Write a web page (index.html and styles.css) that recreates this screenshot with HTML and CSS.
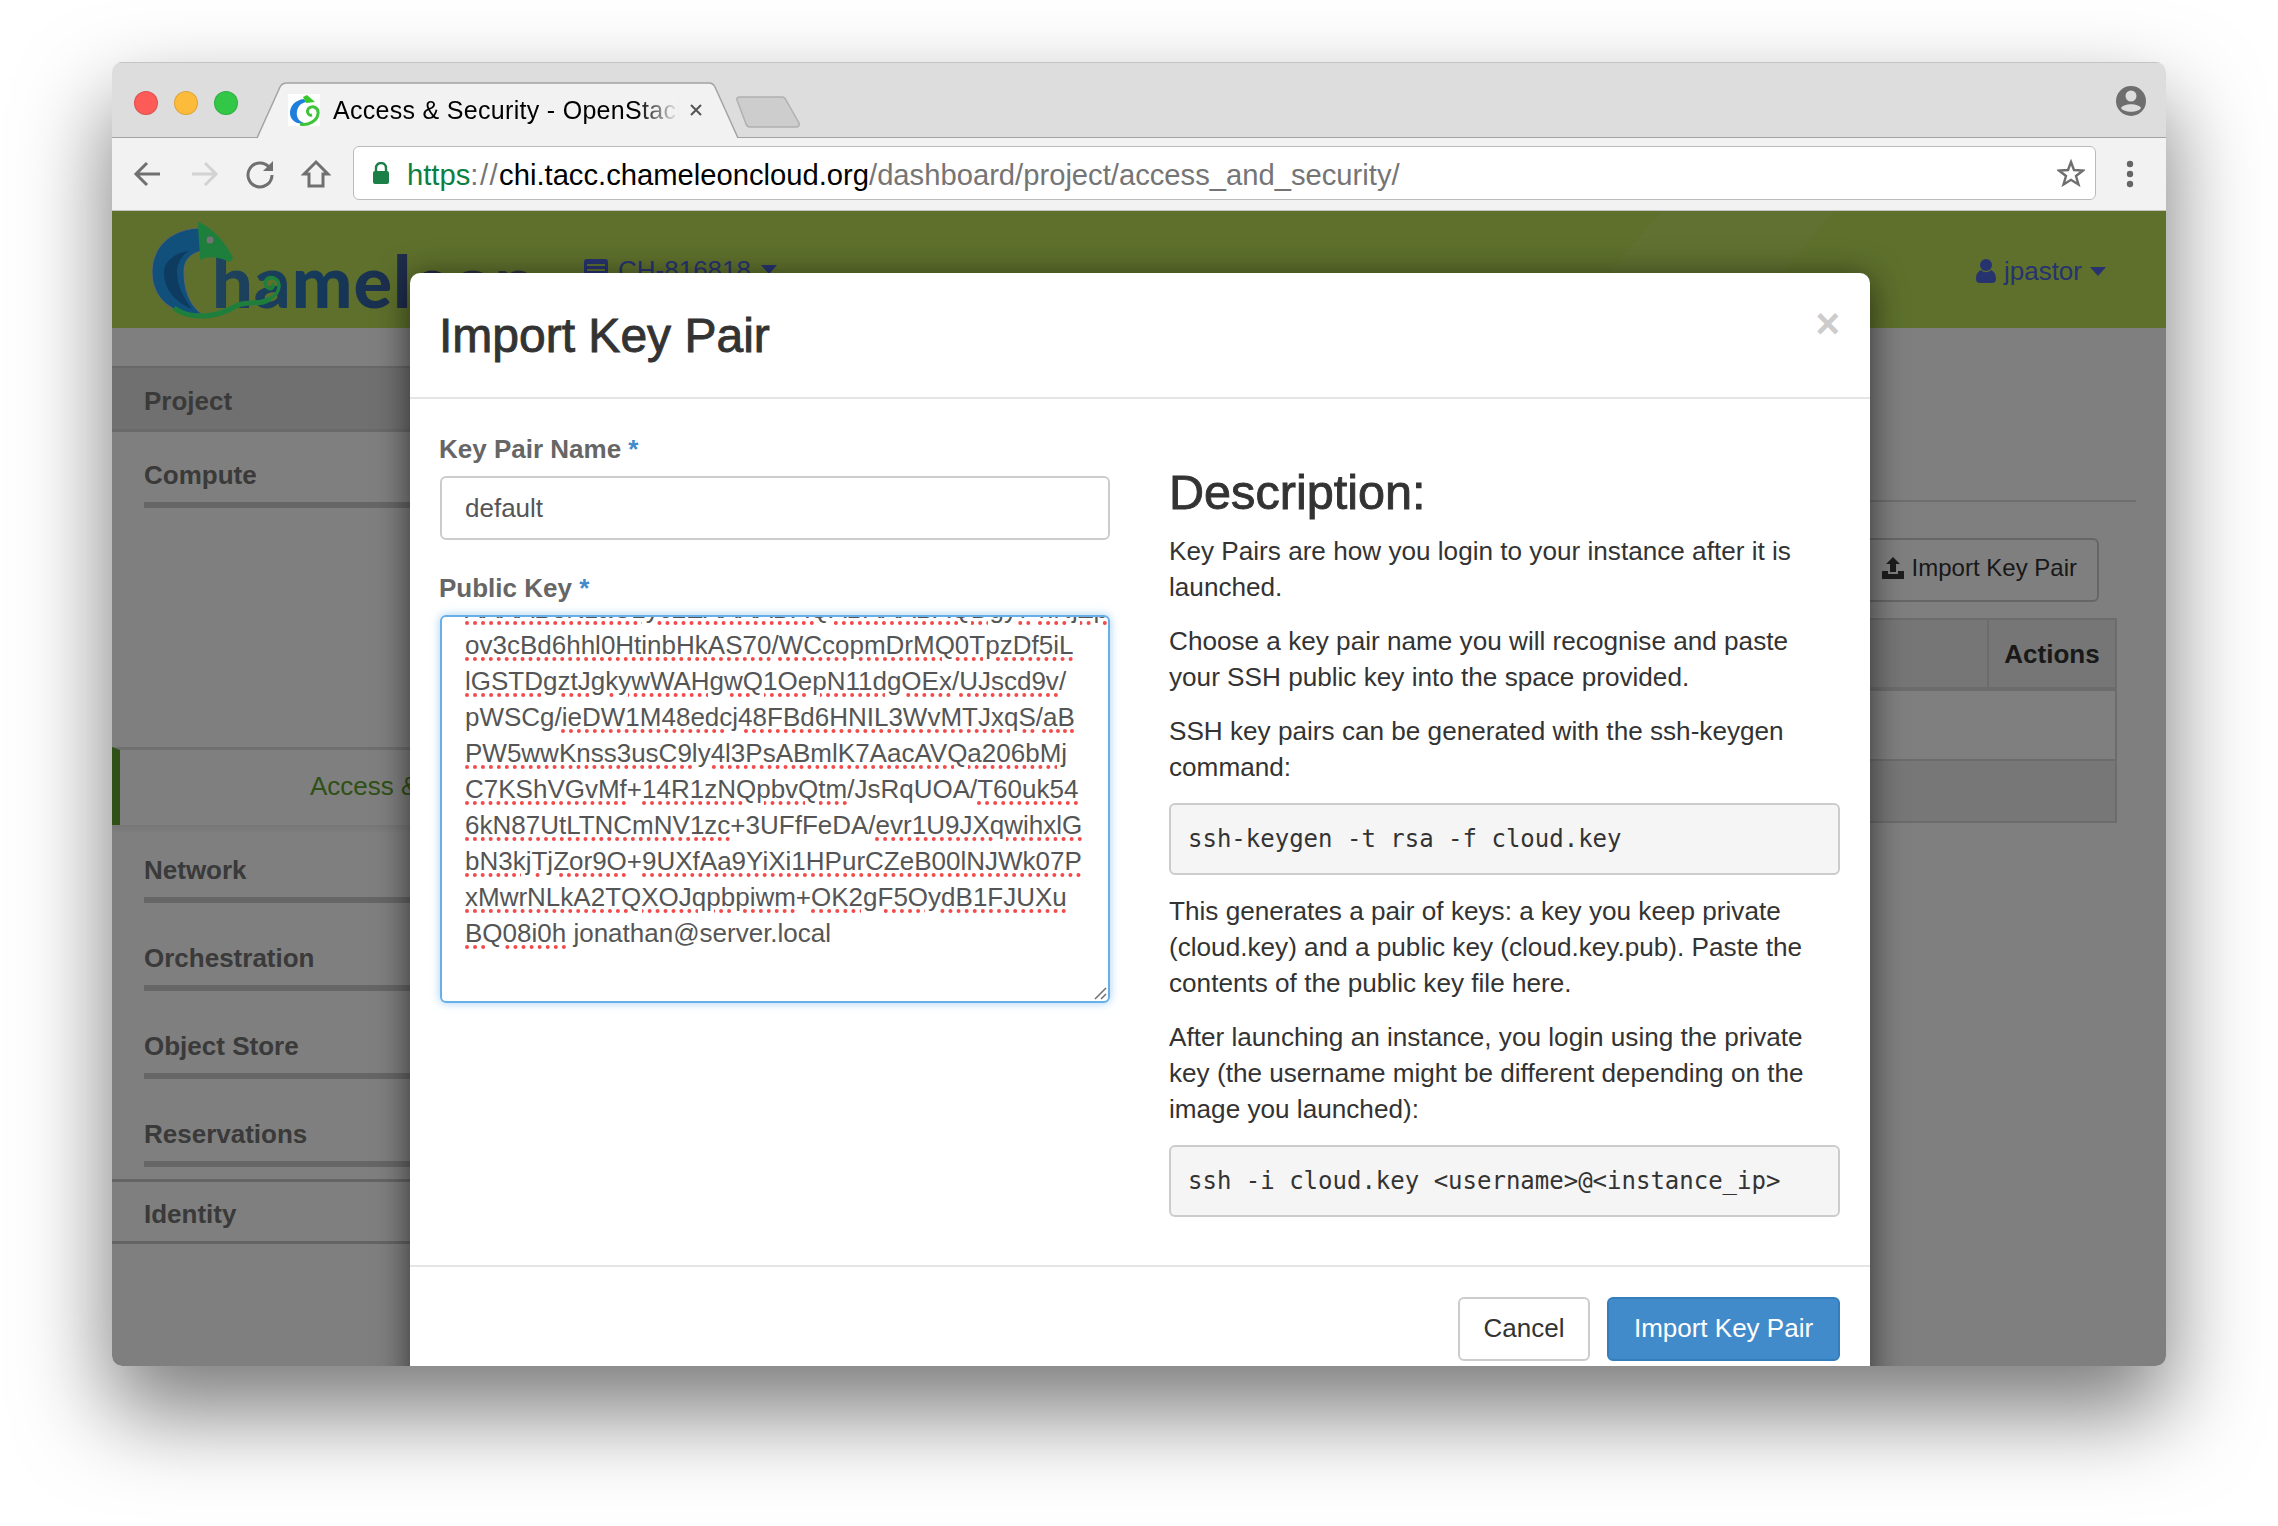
FILE: index.html
```html
<!DOCTYPE html>
<html lang="en">

<head>
    <meta charset="UTF-8">
    <title>Access &amp; Security - OpenStack</title>
    <link rel="stylesheet" href="styles.css">
</head>

<body>
    <div class="window">
        <div class="titlebar">
            <div class="lights">
                <span class="light red"></span>
                <span class="light yellow"></span>
                <span class="light green"></span>
            </div>
            <div class="tab">
                <svg class="tab-shape" width="484" height="57" viewBox="0 0 484 57">
                    <path d="M1 56 L24 5 Q26 1 31 1 L453 1 Q457 1 459 5 L482 56" fill="#f2f2f2" stroke="#a3a3a3" stroke-width="1.5" />
                </svg>
                <svg class="favicon" width="32" height="32" viewBox="0 0 32 32">
                    <rect width="32" height="32" fill="#fff" />
                    <path d="M16 5 C7 6 2 12 2 19 C2 26 9 31 16 29 C10 27 8 22 9 17 C10 12 13 9 18 8 Z" fill="#1f7fdc" />
                    <path d="M15 3 L19 1 L27 8 L18 9 Z" fill="#37c92b" />
                    <path d="M12 30 C20 32 29 27 30 20 C31 14 25 11 21 14 C18 17 20 22 24 21" fill="none" stroke="#3fc33a" stroke-width="3" />
                </svg>
                <span class="tab-title">Access &amp; Security - OpenStack</span>
                <svg class="tab-close" width="14" height="14" viewBox="0 0 14 14">
                    <path d="M2 2 L12 12 M12 2 L2 12" stroke="#555" stroke-width="2" />
                </svg>
            </div>
            <svg class="newtab" width="66" height="32" viewBox="0 0 66 32">
                <path d="M2 4 Q1 1 5 1 L47 1 Q50 1 51 4 L64 27 Q65 31 61 31 L15 31 Q12 31 11 28 Z" fill="#cdcdcd" stroke="#b0b0b0" stroke-width="1.5" />
            </svg>
            <svg class="profile" width="30" height="32" viewBox="0 0 30 32">
                <circle cx="15" cy="16" r="15" fill="#6e6e6e" />
                <circle cx="15" cy="11" r="5.5" fill="#dddddd" />
                <path d="M5 23 C8 18 22 18 25 23 C22 28 8 28 5 23 Z" fill="#dddddd" />
            </svg>
        </div>

        <div class="toolbar">
            <div class="nav-buttons">
                <svg width="30" height="30" viewBox="0 0 30 30">
                    <path d="M27 15 H4 M14 4 L3 15 L14 26" fill="none" stroke="#707070" stroke-width="3" />
                </svg>
                <svg width="30" height="30" viewBox="0 0 30 30">
                    <path d="M3 15 H26 M16 4 L27 15 L16 26" fill="none" stroke="#d2d2d2" stroke-width="3" />
                </svg>
                <svg width="30" height="30" viewBox="0 0 30 30">
                    <path d="M24 8 A12 12 0 1 0 27 16" fill="none" stroke="#707070" stroke-width="3" />
                    <path d="M28 2 V12 H18 Z" fill="#707070" />
                </svg>
                <svg width="30" height="30" viewBox="0 0 30 30">
                    <path d="M15 3 L27 15 H22 V27 H8 V15 H3 Z" fill="none" stroke="#707070" stroke-width="3" />
                </svg>
            </div>
            <div class="address">
                <svg class="lock" width="18" height="22" viewBox="0 0 18 22">
                    <path d="M4 10 V6 A5 5 0 0 1 14 6 V10" fill="none" stroke="#1a8048" stroke-width="2.4" />
                    <rect x="1" y="9" width="16" height="13" rx="2" fill="#1a8048" />
                </svg>
                <span class="url"><span class="scheme">https</span><span class="path scheme-sep">://</span>chi.tacc.chameleoncloud.org<span class="path">/dashboard/project/access_and_security/</span></span>
                <svg class="star" width="28" height="28" viewBox="0 0 28 28">
                    <path d="M14 3 L17 11 L26 11.500 L19 17 L21.500 25.500 L14 20.800 L6.500 25.500 L9 17 L2 11.500 L11 11 Z" fill="none" stroke="#6e6e6e" stroke-width="2.400" />
                </svg>
            </div>
            <svg class="menu" width="8" height="28" viewBox="0 0 8 28">
                <circle cx="4" cy="4" r="3.200" fill="#666" />
                <circle cx="4" cy="14" r="3.200" fill="#666" />
                <circle cx="4" cy="24" r="3.200" fill="#666" />
            </svg>
        </div>

        <div class="page">
            <div class="site-nav">
                <div class="logo">
                    <span class="logo-text">hameleon</span>
                    <svg class="logo-mark" width="86" height="96" viewBox="0 0 86 96">
                        <path d="M50 6 C18 6 0 26 0 50 C0 76 20 94 50 92 C38 84 32 68 32 50 C32 38 38 30 56 28 Z" fill="#20a0f4" stroke="#c8c8c8" stroke-width="1" />
                        <path d="M12 50 C12 66 22 80 40 87 C32 76 25 64 25 50 C25 42 29 34 37 29 C22 31 12 40 12 50 Z" fill="#1a78c0" />
                        <path d="M46 0 C58 4 74 20 81 36 L78 40 C66 34 54 34 48 38 C48 26 46 12 46 0 Z" fill="#3cff7a" />
                        <circle cx="58" cy="18" r="3.500" fill="#e8e8e8" />
                        <path d="M22 86 C38 98 64 96 84 84 C96 78 112 84 118 76" fill="none" stroke="#3cff7a" stroke-width="5" />
                        <path d="M118 76 C128 72 130 60 122 56 C114 54 110 62 116 66 C120 68 123 64 120 62" fill="none" stroke="#3cff7a" stroke-width="3.500" />
                    </svg>
                </div>
                <div class="project-pick">
                    <svg width="24" height="22" viewBox="0 0 24 22">
                        <rect width="24" height="22" rx="3" fill="#4e66de" />
                        <path d="M3 6 H21 M3 11 H21 M3 16 H21" stroke="#bce058" stroke-width="2" />
                    </svg>
                    <span>CH-816818</span>
                    <span class="caret"></span>
                </div>
                <div class="user-menu">
                    <svg width="20" height="24" viewBox="0 0 20 24">
                        <circle cx="10" cy="6" r="6" fill="#4e66de" />
                        <path d="M0 20 C0 14 3 12 5 11 C8 14 12 14 15 11 C17 12 20 14 20 20 C20 23 18 24 16 24 H4 C2 24 0 23 0 20 Z" fill="#4e66de" />
                    </svg>
                    <span>jpastor</span>
                    <span class="caret"></span>
                </div>
            </div>

            <div class="page-body">
                <div class="sidebar">
                    <div class="side-head">Project</div>
                    <div class="side-group compute">Compute</div>
                    <div class="side-active">Access &amp; Security</div>
                    <div class="side-group network">Network</div>
                    <div class="side-group">Orchestration</div>
                    <div class="side-group">Object Store</div>
                    <div class="side-group last">Reservations</div>
                    <div class="side-head identity">Identity</div>
                </div>
                <div class="content">
                    <div class="content-actions">
                        <button class="btn-import">
                            <svg width="22" height="22" viewBox="0 0 22 22">
                                <path d="M11 0 L18 7 H14 V15 H8 V7 H4 Z" fill="#3a3a3a" />
                                <path d="M0 14 H6 V17 H16 V14 H22 V22 H0 Z" fill="#3a3a3a" />
                            </svg>
                            Import Key Pair
                        </button>
                    </div>
                    <table class="keys">
                        <tr class="keys-head">
                            <th></th>
                            <th class="col-actions">Actions</th>
                        </tr>
                        <tr class="row-one">
                            <td colspan="2"></td>
                        </tr>
                        <tr class="row-two">
                            <td colspan="2"></td>
                        </tr>
                    </table>
                </div>
            </div>

            <div class="backdrop"></div>

            <div class="modal">
                <div class="modal-header">
                    <h3>Import Key Pair</h3>
                    <span class="close">&times;</span>
                </div>
                <div class="modal-body">
                    <div class="form-col">
                        <label class="field-label">Key Pair Name <span class="req">*</span></label>
                        <div class="input">default</div>
                        <label class="field-label">Public Key <span class="req">*</span></label>
                        <div class="keybox">
                            <div class="keylines">
                                <div><span class="sp">AAAAB3NzaC1yc2EAAAADAQABAAABAQDgy7</span> <span class="sp">hNjZp/</span></div>
                                <div><span class="sp">ov3cBd6hhl0HtinbHkAS70</span>/<span class="sp">WCcopmDrMQ0TpzDf5iL</span></div>
                                <div><span class="sp">lGSTDgztJgkywWAHgwQ1OepN11dgOEx</span>/<span class="sp">UJscd9v</span>/</div>
                                <div>pWSCg/<span class="sp">ieDW1M48edcj48FBd6HNIL3WvMTJxqS</span>/<span class="sp">aB</span></div>
                                <div><span class="sp">PW5wwKnss3usC9ly4l3PsABmlK7AacAVQa206bMj</span></div>
                                <div><span class="sp">C7KShVGvMf</span>+<span class="sp">14R1zNQpbvQtm</span>/JsRqUOA/<span class="sp">T60uk54</span></div>
                                <div><span class="sp">6kN87UtLTNCmNV1zc</span>+3UFfFeDA/<span class="sp">evr1U9JXqwihxlG</span></div>
                                <div><span class="sp">bN3kjTjZor9O</span>+<span class="sp">9UXfAa9YiXi1HPurCZeB00lNJWk07P</span></div>
                                <div><span class="sp">xMwrNLkA2TQXOJqpbpiwm</span>+<span class="sp">OK2gF5OydB1FJUXu</span></div>
                                <div><span class="sp">BQ08i0h</span> jonathan@server.local</div>
                            </div>
                            <svg class="resizer" width="14" height="14" viewBox="0 0 14 14">
                                <path d="M2 13 L13 2 M8 13 L13 8" stroke="#6f6f6f" stroke-width="1.500" />
                            </svg>
                        </div>
                    </div>
                    <div class="help-col">
                        <h3>Description:</h3>
                        <p>Key Pairs are how you login to your instance after it is launched.</p>
                        <p>Choose a key pair name you will recognise and paste your SSH public key into the space provided.</p>
                        <p>SSH key pairs can be generated with the ssh-keygen command:</p>
                        <pre>ssh-keygen -t rsa -f cloud.key</pre>
                        <p>This generates a pair of keys: a key you keep private (cloud.key) and a public key (cloud.key.pub). Paste the contents of the public key file here.</p>
                        <p>After launching an instance, you login using the private key (the username might be different depending on the image you launched):</p>
                        <pre>ssh -i cloud.key &lt;username&gt;@&lt;instance_ip&gt;</pre>
                    </div>
                </div>
                <div class="modal-footer">
                    <button class="btn btn-default">Cancel</button>
                    <button class="btn btn-primary">Import Key Pair</button>
                </div>
            </div>
        </div>
    </div>
</body>

</html>
```

FILE: styles.css
```css
* {
    box-sizing: border-box;
}

html,
body {
    height: 1526px;
    margin: 0;
    overflow: hidden;
    background-color: #fff;
}

body {
    padding: 62px 0 0 112px;
    font-family: "Liberation Sans", Arial, sans-serif;
    font-size: 26px;
    line-height: 36px;
    color: #333;
}

.window {
    position: relative;
    width: 2054px;
    height: 1304px;
    border-radius: 10px;
    overflow: hidden;
}

/* the shadow has to live outside the clipped window */
body::before {
    content: "";
    position: absolute;
    left: 112px;
    top: 62px;
    width: 2054px;
    height: 1304px;
    border-radius: 10px;
    box-shadow: 0 44px 90px 2px rgba(0, 0, 0, 0.52);
}

.titlebar {
    position: relative;
    display: flex;
    align-items: flex-end;
    height: 76px;
    padding-left: 22px;
    background-color: #ddd;
    border-top: 1px solid #c4c4c4;
    border-bottom: 1.5px solid #a3a3a3;
}

.lights {
    display: flex;
    gap: 16px;
    align-self: flex-start;
    margin-top: 28px;
}

.light {
    width: 24px;
    height: 24px;
    border-radius: 50%;
    border: 1px solid rgba(0, 0, 0, 0.12);
}

.red {
    background-color: #fc5b57;
}

.yellow {
    background-color: #fdbb3c;
}

.green {
    background-color: #33c748;
}

.tab {
    position: relative;
    display: flex;
    align-items: center;
    width: 484px;
    height: 57px;
    margin-left: 18px;
    margin-bottom: -1.5px;
    padding-left: 32px;
    color: #000;
}

.tab-shape {
    position: absolute;
    left: 0;
    top: 0;
}

.favicon {
    position: relative;
    flex: none;
}

.tab-title {
    position: relative;
    width: 346px;
    margin-left: 13px;
    overflow: hidden;
    white-space: nowrap;
    font-size: 25px;
    letter-spacing: 0.3px;
    -webkit-mask-image: linear-gradient(to right, #000 88%, transparent 100%);
    mask-image: linear-gradient(to right, #000 88%, transparent 100%);
}

.tab-close {
    position: relative;
    margin-left: 10px;
}

.newtab {
    margin-left: -5px;
    margin-bottom: 9px;
}

.profile {
    position: absolute;
    right: 20px;
    top: 22px;
}

.toolbar {
    display: flex;
    align-items: center;
    height: 73px;
    padding-left: 21px;
    background-color: #f2f2f2;
    border-bottom: 1.5px solid #c4c4c4;
}

.nav-buttons {
    display: flex;
    gap: 26px;
    width: 220px;
}

.address {
    display: flex;
    align-items: center;
    width: 1743px;
    height: 54px;
    margin-bottom: 2px;
    padding: 0 10px 0 18px;
    background-color: #fff;
    border: 1.5px solid #bbb;
    border-radius: 6px;
}

.lock {
    flex: none;
}

.url {
    flex: 1;
    margin-left: 17px;
    padding-top: 4px;
    font-size: 29.2px;
    white-space: nowrap;
    color: #000;
}

.scheme {
    color: #0b8043;
}

.path {
    color: #757575;
}

.scheme-sep {
    letter-spacing: 1.5px;
}

.menu {
    margin-left: 30px;
}

.page {
    position: relative;
    height: 1155px;
    background-color: #fff;
}

.site-nav {
    display: flex;
    align-items: center;
    height: 117px;
    padding-left: 40px;
    background-color: #bce058;
    background-image: linear-gradient(130deg, transparent 72%, rgba(255, 255, 255, 0.06) 72%, rgba(255, 255, 255, 0.06) 80%, transparent 80%);
    color: #4e66de;
}

.logo {
    position: relative;
    width: 432px;
    height: 96px;
    padding-left: 60px;
}

.logo-mark {
    position: absolute;
    left: 0;
    top: 0;
    overflow: visible;
}

.logo-text {
    display: block;
    padding-top: 22px;
    font-family: Lato, "Liberation Sans", sans-serif;
    font-size: 72px;
    font-weight: 900;
    line-height: 72px;
    letter-spacing: 1px;
    background-image: linear-gradient(to right, #3f88bc, #2a72b4 30%, #3f5590 55%, #5c6480 72%);
    -webkit-background-clip: text;
    background-clip: text;
    color: transparent;
}

.project-pick,
.user-menu {
    display: flex;
    align-items: center;
    gap: 10px;
}

.user-menu {
    position: absolute;
    right: 60px;
    top: 40px;
    height: 40px;
    gap: 8px;
}

.caret {
    width: 0;
    height: 0;
    border-left: 8px solid transparent;
    border-right: 8px solid transparent;
    border-top: 9px solid #4e66de;
}

.page-body {
    display: flex;
}

.sidebar {
    flex: none;
    width: 340px;
    padding-top: 38px;
    font-weight: bold;
    color: #747474;
}

.side-head {
    display: flex;
    align-items: center;
    height: 66px;
    padding-top: 4px;
    padding-left: 32px;
    background-color: #e0e0e0;
    border-top: 2px solid #d0d0d0;
    border-bottom: 3px solid #d4d4d4;
}

.side-head.identity {
    height: 65px;
    background-color: transparent;
    border-top-width: 3px;
    border-top-color: #c8c8c8;
    border-bottom-color: #c8c8c8;
}

.side-group {
    height: 51px;
    margin-bottom: 37px;
    margin-left: 32px;
    padding-bottom: 9px;
    border-bottom: 6px solid #ccc;
}

.side-group.compute {
    margin-top: 25px;
    margin-bottom: 239px;
}

.side-group.network {
    margin-top: 27px;
}

.side-group.last {
    margin-bottom: 12px;
}

.side-active {
    height: 78px;
    padding-left: 190px;
    border-top: 3px solid #dedede;
    border-left: 8px solid #5ea02c;
    font-weight: normal;
    line-height: 72px;
    white-space: nowrap;
    color: #5ea02c;
    box-shadow: 0 4px 6px rgba(0, 0, 0, 0.08);
}

.content {
    flex: 1;
    padding: 172px 30px 0 0;
}

.content-actions {
    display: flex;
    justify-content: flex-end;
    padding: 36px 37px 16px 0;
    border-top: 2px solid #dcdcdc;
}

.btn-import {
    display: flex;
    align-items: center;
    gap: 8px;
    height: 64px;
    padding: 0 20px 4px 22px;
    background-color: #fff;
    border: 2px solid #ccc;
    border-radius: 6px;
    font-family: inherit;
    font-size: 24px;
    color: #333;
}

.keys {
    width: 770px;
    margin-left: auto;
    margin-right: 19px;
    border-collapse: collapse;
}

.keys th,
.keys td {
    padding: 0;
    border: 2px solid #d8d8d8;
}

.keys-head th {
    height: 70px;
    border-bottom-width: 4px;
    background-color: #ececec;
    font-weight: bold;
    color: #333;
}

.col-actions {
    width: 128px;
}

.row-one td {
    height: 71px;
}

.row-two td {
    height: 62px;
    background-color: #eee;
}

.backdrop {
    position: absolute;
    inset: 0;
    background-color: rgba(0, 0, 0, 0.5);
}

.modal {
    position: absolute;
    left: 298px;
    top: 62px;
    width: 1460px;
    background-color: #fff;
    border-radius: 10px;
    box-shadow: 0 6px 34px rgba(0, 0, 0, 0.6);
}

.modal-header {
    display: flex;
    justify-content: space-between;
    height: 126px;
    padding: 0 29px;
    border-bottom: 2px solid #e5e5e5;
}

h3 {
    margin: 0;
    font-size: 48px;
    font-weight: normal;
    line-height: 52px;
    color: #333;
    -webkit-text-stroke: 0.9px #333;
}

.modal-header h3 {
    margin-top: 37px;
}

.close {
    margin-top: 25px;
    margin-right: 1px;
    font-size: 42px;
    font-weight: bold;
    line-height: 52px;
    color: #ccc;
}

.modal-body {
    display: grid;
    grid-template-columns: 670px 671px;
    column-gap: 59px;
    padding: 32px 30px 48px;
}

.field-label {
    display: block;
    margin-bottom: 9px;
    margin-left: -1px;
    font-weight: bold;
    color: #666;
}

.req {
    color: #428bca;
}

.input {
    height: 64px;
    margin-bottom: 30px;
    padding: 0 23px;
    border: 2px solid #ccc;
    border-radius: 6px;
    line-height: 60px;
    color: #555;
}

.keybox {
    position: relative;
    height: 388px;
    overflow: hidden;
    padding: 0 23px;
    border: 2px solid #66afe9;
    border-radius: 6px;
    box-shadow: 0 0 10px rgba(102, 175, 233, 0.6);
    color: #555;
}

.keylines {
    margin-top: -26px;
    white-space: nowrap;
}

.sp {
    text-decoration: underline dotted #f24b4b 4px;
    text-underline-offset: 3px;
}

.resizer {
    position: absolute;
    right: 1px;
    bottom: 1px;
}

.help-col {
    padding-top: 35px;
    font-size: 26.15px;
}

.help-col h3 {
    margin-bottom: 15px;
    font-size: 48.6px;
}

.help-col p {
    margin: 0 0 18px;
}

pre {
    height: 72px;
    margin: 0 0 18px;
    padding: 0 17px;
    background-color: #f5f5f5;
    border: 2px solid #ccc;
    border-radius: 6px;
    font-family: "DejaVu Sans Mono", monospace;
    font-size: 24px;
    line-height: 68px;
    color: #333;
}

.help-col pre:last-child {
    margin-bottom: 0;
}

.modal-footer {
    display: flex;
    justify-content: flex-end;
    gap: 17px;
    padding: 30px 30px 40px;
    border-top: 2px solid #e5e5e5;
}

.btn {
    height: 64px;
    padding-bottom: 2px;
    border-radius: 6px;
    font-family: inherit;
    font-size: 26px;
}

.btn-default {
    width: 132px;
    background-color: #fff;
    border: 2px solid #ccc;
    color: #333;
}

.btn-primary {
    width: 233px;
    background-color: #428bca;
    border: 2px solid #357ebd;
    color: #fff;
}
```
